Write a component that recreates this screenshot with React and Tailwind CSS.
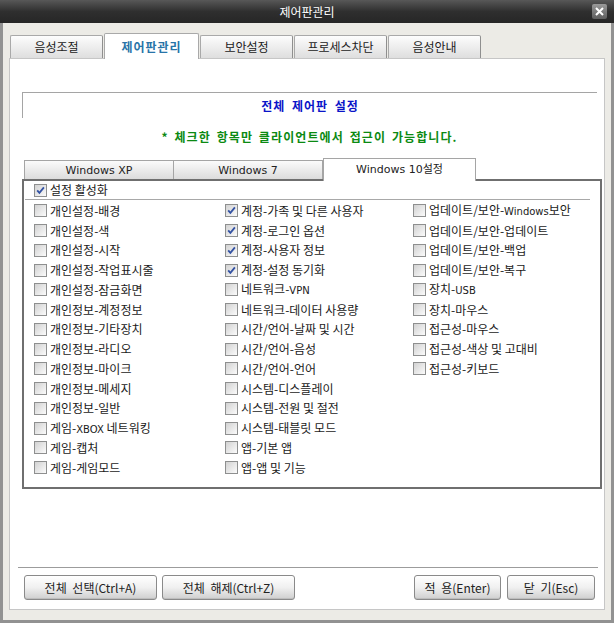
import React from 'react'

const KR = "font-['Noto_Sans_CJK_KR',sans-serif]"

// label parts: odd index = small latin text
const COL1 = [
  ['개인설정-배경'],
  ['개인설정-색'],
  ['개인설정-시작'],
  ['개인설정-작업표시줄'],
  ['개인설정-잠금화면'],
  ['개인정보-계정정보'],
  ['개인정보-기타장치'],
  ['개인정보-라디오'],
  ['개인정보-마이크'],
  ['개인정보-메세지'],
  ['개인정보-일반'],
  ['게임-', 'XBOX', ' 네트워킹'],
  ['게임-캡처'],
  ['게임-게임모드'],
]

const COL2 = [
  ['계정-가족 및 다른 사용자'],
  ['계정-로그인 옵션'],
  ['계정-사용자 정보'],
  ['계정-설정 동기화'],
  ['네트워크-', 'VPN'],
  ['네트워크-데이터 사용량'],
  ['시간/언어-날짜 및 시간'],
  ['시간/언어-음성'],
  ['시간/언어-언어'],
  ['시스템-디스플레이'],
  ['시스템-전원 및 절전'],
  ['시스템-태블릿 모드'],
  ['앱-기본 앱'],
  ['앱-앱 및 기능'],
]
const CHECKED2 = 4

const COL3 = [
  ['업데이트/보안-', 'Windows', '보안'],
  ['업데이트/보안-업데이트'],
  ['업데이트/보안-백업'],
  ['업데이트/보안-복구'],
  ['장치-', 'USB'],
  ['장치-마우스'],
  ['접근성-마우스'],
  ['접근성-색상 및 고대비'],
  ['접근성-키보드'],
]

const TABS = ['음성조절', '제어판관리', '보안설정', '프로세스차단', '음성안내']

function Check({ checked }) {
  return (
    <span className="w-[13px] h-[13px] shrink-0 border border-[#8e8f8f] bg-gradient-to-br from-[#d2d2d2] to-[#fbfbfb] flex items-center justify-center">
      {checked && (
        <svg width="9" height="9" viewBox="0 0 9 9">
          <path d="M1.2 4.3 L3.4 6.8 L7.9 1.4" fill="none" stroke="#3352a3" strokeWidth="1.8" />
        </svg>
      )}
    </span>
  )
}

function Item({ parts, checked }) {
  return (
    <div className="h-[19.75px] flex items-center gap-[3px]">
      <Check checked={checked} />
      <span className="text-[12px] leading-none text-[#1a1a1a] whitespace-nowrap">
        {parts.map((p, i) =>
          i % 2 === 1 ? (
            <span key={i} className="font-['DejaVu_Sans',sans-serif] text-[10px]">{p}</span>
          ) : (
            <span key={i}>{p}</span>
          )
        )}
      </span>
    </div>
  )
}

function Button({ children, w }) {
  return (
    <button
      type="button"
      className={`${w} h-[25px] rounded-[3px] border border-[#8a8a8a] bg-gradient-to-b from-white via-[#f0f0f0] to-[#cfcfcf] text-[12px] leading-none text-[#222] shadow-[inset_0_-1px_0_#bdbdbd] [word-spacing:3px]`}
    >
      {children}
    </button>
  )
}

export default function App() {
  return (
    <div className={`w-[614px] h-[623px] flex flex-col bg-[#ecebe6] ${KR}`}>
      {/* title bar */}
      <div className="h-[23px] shrink-0 relative flex items-center justify-center bg-gradient-to-b from-[#585858] via-[#2f2f2f] to-[#262626]">
        <span className="text-[12px] leading-none text-white">제어판관리</span>
        <span className="absolute right-[7px] top-[4px] w-[15px] h-[15px] rounded-[2px] bg-gradient-to-b from-[#9a9a9a] to-[#5e5e5e] flex items-center justify-center">
          <svg width="9" height="9" viewBox="0 0 9 9">
            <path d="M1 1 L8 8 M8 1 L1 8" stroke="#fff" strokeWidth="2" />
          </svg>
        </span>
      </div>

      <div className="flex-1 flex flex-col border-l-[3px] border-r-[3px] border-b-[3px] border-[#929292] px-[6px] pt-[10px] pb-[10px]">
        {/* main tabs */}
        <div className="h-[25px] shrink-0 flex items-end gap-[1px] pl-[1px]">
          {TABS.map((t, i) =>
            i === 1 ? (
              <div
                key={t}
                className="relative z-10 w-[95px] h-[26px] -mb-[1px] bg-white border border-b-0 border-[#a9a9a9] rounded-t-[2px] flex items-center justify-center text-[12px] tracking-[1px] font-bold text-[#2874a8] leading-none"
              >
                {t}
              </div>
            ) : (
              <div
                key={t}
                className="w-[93px] h-[23px] bg-gradient-to-b from-[#fdfdfd] to-[#dedede] border border-b-0 border-[#a9a9a9] border-r-[#8f8f8f] rounded-t-[2px] flex items-center justify-center text-[12px] text-[#222] leading-none"
              >
                {t}
              </div>
            )
          )}
        </div>

        {/* content panel */}
        <div className="flex-1 flex flex-col bg-white border border-[#c6c6c6]">
          <div className="pl-[12px] pt-[33px]">
            <div className="w-[575px] h-[26px] border-t border-l border-[#a5a5a5] flex items-center justify-center">
              <span className="text-[12px] tracking-[1px] [word-spacing:3px] font-bold text-[#0a14c8] leading-none">전체 제어판 설정</span>
            </div>
            <div className="w-[575px] mt-[11px] h-[16px] flex items-center justify-center text-[12px] tracking-[1.1px] [word-spacing:2px] font-bold text-[#0b8a12] leading-none">
              * 체크한 항목만 클라이언트에서 접근이 가능합니다.
            </div>

            {/* sub tabs */}
            <div className="mt-[12px] h-[22px] flex items-end pl-[2px] font-['DejaVu_Sans','Noto_Sans_CJK_KR',sans-serif] text-[11px] text-[#222]">
              <div className="w-[150px] h-[19px] bg-gradient-to-b from-[#fbfbfb] to-[#dcdcdc] border border-b-0 border-[#a5a5a5] flex items-center justify-center leading-none">
                Windows XP
              </div>
              <div className="w-[149px] h-[19px] bg-gradient-to-b from-[#fbfbfb] to-[#dcdcdc] border border-b-0 border-l-0 border-[#a5a5a5] flex items-center justify-center leading-none">
                Windows 7
              </div>
              <div className="relative z-10 w-[153px] h-[23px] -mb-[2px] bg-white border border-b-0 border-[#a5a5a5] flex items-center justify-center leading-none pb-[2px]">
                Windows 10설정
              </div>
            </div>

            {/* checkbox panel */}
            <div className="w-[580px] h-[310px] border-2 border-[#6f6f6f] flex flex-col">
              <div className="h-[18px] flex items-center pl-[10px]">
                <Item parts={['설정 활성화']} checked />
              </div>
              <div className="mr-[10px] ml-[1px] border-t border-[#a8a8a8]" />
              <div className="pt-[1px] pl-[10px] grid grid-cols-[191px_188px_1fr]">
                <div>
                  {COL1.map((p, i) => <Item key={i} parts={p} />)}
                </div>
                <div>
                  {COL2.map((p, i) => <Item key={i} parts={p} checked={i < CHECKED2} />)}
                </div>
                <div>
                  {COL3.map((p, i) => <Item key={i} parts={p} />)}
                </div>
              </div>
            </div>
          </div>

          <div className="flex-1" />

          <div className="ml-[8px] mr-[6px] border-t border-[#9c9c9c]" />
          <div className="pt-[7px] pb-[9px] pl-[14px] pr-[9px] flex items-center">
            <div className="flex gap-[5px]">
              <Button w="w-[133px]">전체 선택(Ctrl+A)</Button>
              <Button w="w-[133px]">전체 해제(Ctrl+Z)</Button>
            </div>
            <div className="ml-auto flex gap-[6px]">
              <Button w="w-[87px]">적 용(Enter)</Button>
              <Button w="w-[88px]">닫 기(Esc)</Button>
            </div>
          </div>
        </div>
      </div>
    </div>
  )
}
